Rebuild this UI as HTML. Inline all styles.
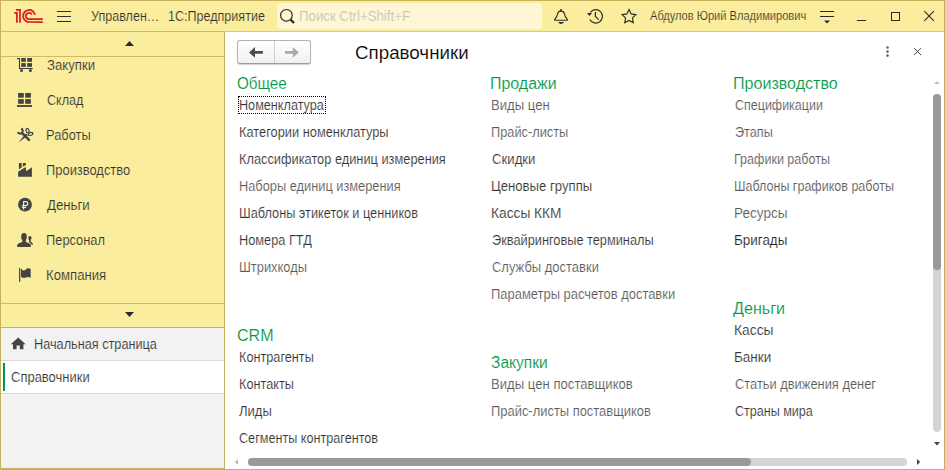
<!DOCTYPE html>
<html><head><meta charset="utf-8"><title>1C</title>
<style>
html,body{margin:0;padding:0;}
body{width:945px;height:470px;overflow:hidden;position:relative;background:#fbed9e;font-family:"Liberation Sans",sans-serif;font-size:13px;color:#333;}
div{position:absolute;white-space:nowrap;box-sizing:border-box;}
svg{display:block;position:absolute;overflow:visible;}
.t{line-height:20px;transform-origin:0 0;}
.hl{background:#cdbb66;height:1px;}
</style></head><body>
<!-- backgrounds -->
<div style="left:225px;top:32px;width:719px;height:437px;background:#fff"></div>
<div style="left:1px;top:328px;width:223px;height:140px;background:#f2f2f2"></div>
<div style="left:1px;top:361px;width:223px;height:32px;background:#fff"></div>
<div style="left:1px;top:360px;width:223px;height:1px;background:#dadada"></div>
<div style="left:1px;top:393px;width:223px;height:1px;background:#dadada"></div>
<div style="left:3px;top:363px;width:2px;height:28px;background:#009646"></div>
<!-- lines -->
<div class="hl" style="left:0;top:31px;width:225px"></div>
<div class="hl" style="left:225px;top:31px;width:720px;background:#dccb74"></div>
<div class="hl" style="left:0;top:56px;width:224px"></div>
<div class="hl" style="left:0;top:303px;width:224px"></div>
<div class="hl" style="left:0;top:327px;width:224px;background:#c4b25c"></div>
<div style="left:224px;top:32px;width:1px;height:437px;background:#c4b25c"></div>
<div style="left:0;top:468px;width:225px;height:1px;background:#c4b25c"></div>
<!-- window frame -->
<div style="left:0;top:0;width:945px;height:470px;border:1px solid #c4b25c;z-index:50"></div>

<!-- top bar -->
<svg style="left:13px;top:8px" width="32" height="16" viewBox="13 8 32 16">
 <path d="M14.200 12.900H16.900V22.800M16 9.850H20V22.800" fill="none" stroke="#d91c20" stroke-width="1.750" stroke-linejoin="miter"/>
 <path d="M35.050 14.960A6 6 0 1 0 29.150 22H42.800" fill="none" stroke="#d91c20" stroke-width="1.750"/>
 <path d="M31.810 14.690A3.100 3.100 0 1 0 29 19.100H42.800" fill="none" stroke="#d91c20" stroke-width="1.750"/>
</svg>
<div style="left:57px;top:11px;width:14px;height:1px;background:#2e2e38"></div>
<div style="left:57px;top:16px;width:14px;height:1px;background:#2e2e38"></div>
<div style="left:57px;top:21px;width:14px;height:1px;background:#2e2e38"></div>
<div style="left:277px;top:3px;width:265px;height:26px;background:#fef6d4;border-radius:2px"></div>
<svg style="left:278px;top:6px" width="20" height="20" viewBox="278 6 20 20">
 <circle cx="286.4" cy="15.3" r="5.8" fill="none" stroke="#2a2a2a" stroke-width="1.2"/>
 <path d="M290.6 19.6L294 23" stroke="#2a2a2a" stroke-width="2.4"/>
</svg>
<!-- bell -->
<svg style="left:552px;top:6px" width="20" height="20" viewBox="552 6 20 20">
 <path d="M554.900 20.300C554.400 20.300 554.300 19.700 554.700 19.300C556.600 17.200 557.200 16.300 557.600 13.800C557.900 12 558.900 11.100 561 11.100C563.100 11.100 564.100 12 564.400 13.800C564.800 16.300 565.400 17.200 567.300 19.300C567.700 19.700 567.600 20.300 567.100 20.300Z" fill="none" stroke="#2a2a2a" stroke-width="1.100" stroke-linejoin="round"/>
 <rect x="560.250" y="9" width="1.500" height="2.200" fill="#2a2a2a"/>
 <path d="M558 22H564Q561 26 558 22Z" fill="#2a2a2a"/>
</svg>
<!-- history -->
<svg style="left:586px;top:6px" width="20" height="20" viewBox="586 6 20 20">
 <path d="M590.330 12.400A6.700 6.700 0 1 1 589.830 19.490" fill="none" stroke="#2a2a2a" stroke-width="1.200"/>
 <path d="M587 13L592 13.100L589.400 16Z" fill="#2a2a2a"/>
 <path d="M595.400 12.100V16.500L598.600 19.600" fill="none" stroke="#2a2a2a" stroke-width="1.200"/>
</svg>
<!-- star -->
<svg style="left:620px;top:6px" width="20" height="20" viewBox="620 6 20 20">
 <path d="M629.00 9.55L631.12 13.89L635.90 14.56L632.42 17.91L633.26 22.67L629.00 20.40L624.74 22.67L625.58 17.91L622.10 14.56L626.88 13.89Z" fill="none" stroke="#2a2a2a" stroke-width="1.150" stroke-linejoin="miter"/>
</svg>
<!-- menu -->
<div style="left:820px;top:11px;width:14px;height:1px;background:#2a2a2a"></div>
<div style="left:820px;top:16px;width:14px;height:1px;background:#2a2a2a"></div>
<svg style="left:823px;top:20px" width="8" height="5" viewBox="0 0 8 5"><path d="M1 0.500H7L4 3.500Z" fill="#2a2a2a"/></svg>
<!-- min max close -->
<div style="left:857px;top:20px;width:9px;height:1px;background:#2a2a2a"></div>
<div style="left:891px;top:12px;width:9px;height:9px;border:1px solid #2a2a2a"></div>
<svg style="left:923px;top:10px" width="12" height="12" viewBox="923 10 12 12"><path d="M924.300 11.200L933.900 20.800M933.900 11.200L924.300 20.800" stroke="#2a2a2a" stroke-width="1.100"/></svg>

<!-- sidebar arrows -->
<svg style="left:124px;top:40px" width="11" height="7" viewBox="0 0 11 7"><path d="M1 6L5.500 1L10 6Z" fill="#2b2b33"/></svg>
<svg style="left:124px;top:311px" width="11" height="7" viewBox="0 0 11 7"><path d="M1 1H10L5.500 6Z" fill="#2b2b33"/></svg>

<!-- sidebar icons -->
<!-- cart -->
<svg style="left:16px;top:56px" width="18" height="18" viewBox="16 56 18 18">
 <path d="M17 58.600H19.500V68.500H32.800" fill="none" stroke="#3c3c44" stroke-width="1.100"/>
 <rect x="21.200" y="58" width="4.600" height="3.800" fill="#444"/><rect x="27.200" y="58" width="4.800" height="3.800" fill="#444"/>
 <rect x="21.200" y="63.100" width="4.600" height="3.800" fill="#444"/><rect x="27.200" y="63.100" width="4.800" height="3.800" fill="#444"/>
 <circle cx="21.500" cy="70.600" r="1.500" fill="#444"/><circle cx="30.400" cy="70.600" r="1.500" fill="#444"/>
</svg>
<!-- grid -->
<svg style="left:16px;top:91px" width="18" height="18" viewBox="16 91 18 18">
 <rect x="18.100" y="93" width="5.700" height="4.700" fill="#444"/><rect x="25.200" y="93" width="5.700" height="4.700" fill="#444"/>
 <rect x="18.100" y="99.100" width="5.700" height="4.700" fill="#444"/><rect x="25.200" y="99.100" width="5.700" height="4.700" fill="#444"/>
 <rect x="17" y="105.100" width="15" height="1.800" fill="#3a3a42"/>
</svg>
<!-- tools -->
<svg style="left:16px;top:126px" width="18" height="18" viewBox="16 126 18 18">
 <path d="M22.500 133.400L29.700 140.600" stroke="#444" stroke-width="2.400" fill="none"/>
 <path d="M17.700 132.300A2.700 2.700 0 1 0 21.200 128.500" fill="none" stroke="#444" stroke-width="2"/>
 <ellipse cx="27.500" cy="130.700" rx="1.400" ry="2.300" transform="rotate(-18 27.500 130.700)" fill="none" stroke="#444" stroke-width="1.200"/>
 <ellipse cx="30.600" cy="133.900" rx="2.300" ry="1.400" transform="rotate(-18 30.600 133.900)" fill="none" stroke="#444" stroke-width="1.200"/>
 <path d="M25.900 133.400L28 135.600L18.400 142.500Z" fill="#444"/>
</svg>
<!-- factory -->
<svg style="left:16px;top:161px" width="18" height="18" viewBox="16 161 18 18">
 <path d="M18.100 171.800L25.700 166.900L26.300 171.300L31.900 167.200V176.800H18.100Z" fill="#444"/>
 <path d="M18.900 163.100H21.700V167.500L18.900 169.300Z" fill="#444"/>
 <path d="M22.900 163.100H25.900V164.900L22.900 166.800Z" fill="#444"/>
</svg>
<!-- ruble -->
<svg style="left:16px;top:196px" width="18" height="18" viewBox="16 196 18 18">
 <circle cx="25" cy="204.700" r="6.900" fill="#444"/>
 <path d="M23.600 209.800V201.600H25.800A2 2 0 0 1 25.800 205.600H21.900M21.900 207.500H26.200" fill="none" stroke="#fbed9e" stroke-width="1.150"/>
</svg>
<!-- people -->
<svg style="left:16px;top:231px" width="18" height="18" viewBox="16 231 18 18">
 <ellipse cx="24" cy="236.800" rx="2.850" ry="3.750" fill="#444"/>
 <path d="M17.100 246C17.100 243.200 20.400 243.300 22.300 241.800V239H25.800V241.800C27.700 243.300 31 243.200 31 246C31 246.600 30.700 246.900 30.100 246.900H18C17.400 246.900 17.100 246.600 17.100 246Z" fill="#444"/>
 <ellipse cx="29.900" cy="238.100" rx="1.650" ry="2.150" fill="#444"/>
 <path d="M29.100 239.500H30.700V241.200C31.300 242.200 32.600 242.600 33.100 244.600L31.900 245.100C31.300 243.500 29.600 243.300 29.100 241.800Z" fill="#444"/>
</svg>
<!-- flag -->
<svg style="left:16px;top:266px" width="18" height="18" viewBox="16 266 18 18">
 <rect x="19.050" y="268.100" width="1.250" height="13.800" fill="#444"/>
 <path d="M21 268.500C22 269.300 22.600 270.600 23.800 270.600C25.500 270.600 26.300 268.200 28.200 268.200C29.200 268.200 30 268.600 30.700 269.100V277.700C30 277.200 29 276.900 28 276.900C26.300 276.900 25.500 277.900 23.800 277.900C22.600 277.900 21.800 277.300 21 276.700Z" fill="#444"/>
</svg>
<!-- home -->
<svg style="left:10px;top:336px" width="17" height="15" viewBox="10 336 17 15">
 <path d="M18.200 337.600L10.800 344.200H13V349.300H16.600V345.400H19.800V349.300H23.400V344.200H25.600Z" fill="#444"/>
</svg>

<!-- nav buttons -->
<div style="left:237px;top:40px;width:74px;height:24px;border:1px solid #b4b4b4;border-bottom-color:#9c9c9c;border-radius:3px;background:linear-gradient(#ffffff,#f1f1f1);box-shadow:0 1px 1px rgba(0,0,0,.18)"></div>
<div style="left:274px;top:41px;width:1px;height:22px;background:#cfcfcf"></div>
<svg style="left:248px;top:46px" width="16" height="13" viewBox="248 46 16 13"><path d="M249 52.400L255 47.100V51H262.900V53.800H255V57.700Z" fill="#4d4d4d"/></svg>
<svg style="left:284px;top:46px" width="16" height="13" viewBox="284 46 16 13"><path d="M298.800 52.400L292.800 47.100V51H285V53.800H292.800V57.700Z" fill="#a9a9a9"/></svg>
<!-- kebab / close -->
<svg style="left:885px;top:45px" width="6" height="13" viewBox="885 45 6 13"><circle cx="887.500" cy="47.500" r="1.300" fill="#666"/><circle cx="887.500" cy="51.600" r="1.300" fill="#666"/><circle cx="887.500" cy="55.600" r="1.300" fill="#666"/></svg>
<svg style="left:913px;top:47px" width="9" height="9" viewBox="913 47 9 9"><path d="M914.200 48.200L921 55M921 48.200L914.200 55" stroke="#444" stroke-width="1"/></svg>
<!-- focus box -->
<div style="left:238px;top:96px;width:88px;height:18px;border:1px dotted #000"></div>

<!-- scrollbars -->
<svg style="left:933px;top:80px" width="8" height="5" viewBox="0 0 8 5"><path d="M1 4L4 1L7 4Z" fill="#c0c0c0"/></svg>
<div style="left:933px;top:94px;width:8px;height:338px;border-radius:4px;background:#d4d4d4"></div>
<div style="left:933px;top:94px;width:8px;height:176px;border-radius:4px;background:#999"></div>
<svg style="left:933px;top:441px" width="8" height="5" viewBox="0 0 8 5"><path d="M1 1H7L4 4.500Z" fill="#444"/></svg>
<svg style="left:234px;top:458px" width="5" height="8" viewBox="0 0 5 8"><path d="M4 1V7L0.800 4Z" fill="#b8b8b8"/></svg>
<div style="left:248px;top:458px;width:659px;height:8px;border-radius:4px;background:#d4d4d4"></div>
<div style="left:248px;top:458px;width:503px;height:8px;border-radius:4px;background:#999"></div>
<svg style="left:916px;top:458px" width="5" height="8" viewBox="0 0 5 8"><path d="M1 1V7L4.200 4Z" fill="#444"/></svg>

<div class="t" style="left:238.57px;top:95.00px;font-size:14px;transform:scaleX(0.9024);color:#333333;-webkit-text-stroke:0.15px #fff">Номенклатура</div>
<div class="t" style="left:238.56px;top:122.00px;font-size:14px;transform:scaleX(0.9153);color:#333333;-webkit-text-stroke:0.15px #fff">Категории номенклатуры</div>
<div class="t" style="left:238.56px;top:149.00px;font-size:14px;transform:scaleX(0.9143);color:#333333;-webkit-text-stroke:0.15px #fff">Классификатор единиц измерения</div>
<div class="t" style="left:238.56px;top:176.00px;font-size:14px;transform:scaleX(0.9146);color:#5a5a5a;-webkit-text-stroke:0.15px #fff">Наборы единиц измерения</div>
<div class="t" style="left:238.56px;top:203.00px;font-size:14px;transform:scaleX(0.9099);color:#333333;-webkit-text-stroke:0.15px #fff">Шаблоны этикеток и ценников</div>
<div class="t" style="left:238.56px;top:230.00px;font-size:14px;transform:scaleX(0.9108);color:#333333;-webkit-text-stroke:0.15px #fff">Номера ГТД</div>
<div class="t" style="left:238.55px;top:257.00px;font-size:14px;transform:scaleX(0.9217);color:#5a5a5a;-webkit-text-stroke:0.15px #fff">Штрихкоды</div>
<div class="t" style="left:238.57px;top:347.00px;font-size:14px;transform:scaleX(0.9072);color:#333333;-webkit-text-stroke:0.15px #fff">Контрагенты</div>
<div class="t" style="left:238.57px;top:374.00px;font-size:14px;transform:scaleX(0.9064);color:#333333;-webkit-text-stroke:0.15px #fff">Контакты</div>
<div class="t" style="left:239.47px;top:401.00px;font-size:14px;transform:scaleX(0.9324);color:#333333;-webkit-text-stroke:0.15px #fff">Лиды</div>
<div class="t" style="left:239.02px;top:428.00px;font-size:14px;transform:scaleX(0.9021);color:#333333;-webkit-text-stroke:0.15px #fff">Сегменты контрагентов</div>
<div class="t" style="left:491.33px;top:95.00px;font-size:14px;transform:scaleX(0.9372);color:#5a5a5a;-webkit-text-stroke:0.15px #fff">Виды цен</div>
<div class="t" style="left:491.36px;top:122.00px;font-size:14px;transform:scaleX(0.9131);color:#5a5a5a;-webkit-text-stroke:0.15px #fff">Прайс-листы</div>
<div class="t" style="left:491.79px;top:149.00px;font-size:14px;transform:scaleX(0.9416);color:#333333;-webkit-text-stroke:0.15px #fff">Скидки</div>
<div class="t" style="left:491.33px;top:176.00px;font-size:14px;transform:scaleX(0.9393);color:#333333;-webkit-text-stroke:0.15px #fff">Ценовые группы</div>
<div class="t" style="left:491.27px;top:203.00px;font-size:14px;transform:scaleX(0.9813);color:#333333;-webkit-text-stroke:0.15px #fff">Кассы ККМ</div>
<div class="t" style="left:491.82px;top:230.00px;font-size:14px;transform:scaleX(0.9123);color:#333333;-webkit-text-stroke:0.15px #fff">Эквайринговые терминалы</div>
<div class="t" style="left:491.80px;top:257.00px;font-size:14px;transform:scaleX(0.9269);color:#5a5a5a;-webkit-text-stroke:0.15px #fff">Службы доставки</div>
<div class="t" style="left:491.35px;top:284.00px;font-size:14px;transform:scaleX(0.9239);color:#5a5a5a;-webkit-text-stroke:0.15px #fff">Параметры расчетов доставки</div>
<div class="t" style="left:491.33px;top:374.00px;font-size:14px;transform:scaleX(0.9378);color:#5a5a5a;-webkit-text-stroke:0.15px #fff">Виды цен поставщиков</div>
<div class="t" style="left:491.35px;top:401.00px;font-size:14px;transform:scaleX(0.9232);color:#5a5a5a;-webkit-text-stroke:0.15px #fff">Прайс-листы поставщиков</div>
<div class="t" style="left:734.73px;top:95.00px;font-size:14px;transform:scaleX(0.8920);color:#5a5a5a;-webkit-text-stroke:0.15px #fff">Спецификации</div>
<div class="t" style="left:734.72px;top:122.00px;font-size:14px;transform:scaleX(0.9050);color:#5a5a5a;-webkit-text-stroke:0.15px #fff">Этапы</div>
<div class="t" style="left:734.28px;top:149.00px;font-size:14px;transform:scaleX(0.8964);color:#5a5a5a;-webkit-text-stroke:0.15px #fff">Графики работы</div>
<div class="t" style="left:734.28px;top:176.00px;font-size:14px;transform:scaleX(0.8946);color:#5a5a5a;-webkit-text-stroke:0.15px #fff">Шаблоны графиков работы</div>
<div class="t" style="left:734.19px;top:203.00px;font-size:14px;transform:scaleX(0.9679);color:#5a5a5a;-webkit-text-stroke:0.15px #fff">Ресурсы</div>
<div class="t" style="left:734.20px;top:230.00px;font-size:14px;transform:scaleX(0.9589);color:#222;-webkit-text-stroke:0.15px #fff">Бригады</div>
<div class="t" style="left:734.16px;top:320.00px;font-size:14px;transform:scaleX(0.9881);color:#333333;-webkit-text-stroke:0.15px #fff">Кассы</div>
<div class="t" style="left:734.19px;top:347.00px;font-size:14px;transform:scaleX(0.9644);color:#333333;-webkit-text-stroke:0.15px #fff">Банки</div>
<div class="t" style="left:734.71px;top:374.00px;font-size:14px;transform:scaleX(0.9189);color:#5a5a5a;-webkit-text-stroke:0.15px #fff">Статьи движения денег</div>
<div class="t" style="left:734.73px;top:401.00px;font-size:14px;transform:scaleX(0.8965);color:#333333;-webkit-text-stroke:0.15px #fff">Страны мира</div>
<div class="t" style="left:237.39px;top:74.00px;font-size:16px;transform:scaleX(0.9490);color:#009646;-webkit-text-stroke:0.15px #fff">Общее</div>
<div class="t" style="left:237.25px;top:326.00px;font-size:16px;transform:scaleX(1.0029);color:#009646;-webkit-text-stroke:0.15px #fff">CRM</div>
<div class="t" style="left:489.75px;top:74.00px;font-size:16px;transform:scaleX(0.9969);color:#009646;-webkit-text-stroke:0.15px #fff">Продажи</div>
<div class="t" style="left:490.51px;top:353.00px;font-size:16px;transform:scaleX(0.9709);color:#009646;-webkit-text-stroke:0.15px #fff">Закупки</div>
<div class="t" style="left:732.55px;top:74.00px;font-size:16px;transform:scaleX(1.0039);color:#009646;-webkit-text-stroke:0.15px #fff">Производство</div>
<div class="t" style="left:733.20px;top:299.00px;font-size:16px;transform:scaleX(1.0079);color:#009646;-webkit-text-stroke:0.15px #fff">Деньги</div>
<div class="t" style="left:355.29px;top:43.00px;font-size:18.67px;transform:scaleX(1.0059);color:#000;-webkit-text-stroke:0.15px #fff">Справочники</div>
<div class="t" style="left:47.13px;top:55.40px;font-size:14px;transform:scaleX(0.9414);color:#333333;-webkit-text-stroke:0.15px #fbed9e">Закупки</div>
<div class="t" style="left:46.93px;top:90.40px;font-size:14px;transform:scaleX(0.8962);color:#333333;-webkit-text-stroke:0.15px #fbed9e">Склад</div>
<div class="t" style="left:46.45px;top:125.40px;font-size:14px;transform:scaleX(0.9204);color:#333333;-webkit-text-stroke:0.15px #fbed9e">Работы</div>
<div class="t" style="left:46.45px;top:160.40px;font-size:14px;transform:scaleX(0.9218);color:#333333;-webkit-text-stroke:0.15px #fbed9e">Производство</div>
<div class="t" style="left:47.00px;top:195.40px;font-size:14px;transform:scaleX(0.9446);color:#333333;-webkit-text-stroke:0.15px #fbed9e">Деньги</div>
<div class="t" style="left:46.45px;top:230.40px;font-size:14px;transform:scaleX(0.9177);color:#333333;-webkit-text-stroke:0.15px #fbed9e">Персонал</div>
<div class="t" style="left:46.43px;top:265.40px;font-size:14px;transform:scaleX(0.9393);color:#333333;-webkit-text-stroke:0.15px #fbed9e">Компания</div>
<div class="t" style="left:33.67px;top:334.00px;font-size:14px;transform:scaleX(0.9073);color:#333333;-webkit-text-stroke:0.15px #f2f2f2">Начальная страница</div>
<div class="t" style="left:10.80px;top:367.00px;font-size:14px;transform:scaleX(0.9277);color:#333333;-webkit-text-stroke:0.15px #fff">Справочники</div>
<div class="t" style="left:91.15px;top:6.00px;font-size:14px;transform:scaleX(0.8976);color:#333333;-webkit-text-stroke:0.15px #fbed9e">Управлен…</div>
<div class="t" style="left:167.50px;top:6.00px;font-size:14px;transform:scaleX(0.8967);color:#333333;-webkit-text-stroke:0.15px #fbed9e">1С:Предприятие</div>
<div class="t" style="left:298.62px;top:5.60px;font-size:14px;transform:scaleX(0.9455);color:#c4c4bc;-webkit-text-stroke:0.15px #fef6d4">Поиск Ctrl+Shift+F</div>
<div class="t" style="left:650.00px;top:6.00px;font-size:12px;transform:scaleX(0.9236);color:#333333;-webkit-text-stroke:0.15px #fbed9e">Абдулов Юрий Владимирович</div>
</body></html>
